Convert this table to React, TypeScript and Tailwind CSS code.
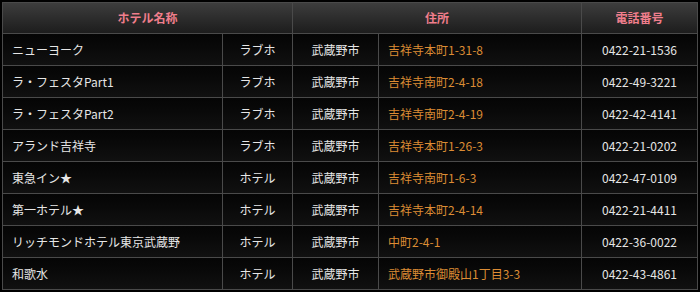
const hotels = [
  { name: "ニューヨーク", type: "ラブホ", city: "武蔵野市", address: "吉祥寺本町1-31-8", tel: "0422-21-1536" },
  { name: "ラ・フェスタPart1", type: "ラブホ", city: "武蔵野市", address: "吉祥寺南町2-4-18", tel: "0422-49-3221" },
  { name: "ラ・フェスタPart2", type: "ラブホ", city: "武蔵野市", address: "吉祥寺南町2-4-19", tel: "0422-42-4141" },
  { name: "アランド吉祥寺", type: "ラブホ", city: "武蔵野市", address: "吉祥寺本町1-26-3", tel: "0422-21-0202" },
  { name: "東急イン★", type: "ホテル", city: "武蔵野市", address: "吉祥寺南町1-6-3", tel: "0422-47-0109" },
  { name: "第一ホテル★", type: "ホテル", city: "武蔵野市", address: "吉祥寺本町2-4-14", tel: "0422-21-4411" },
  { name: "リッチモンドホテル東京武蔵野", type: "ホテル", city: "武蔵野市", address: "中町2-4-1", tel: "0422-36-0022" },
  { name: "和歌水", type: "ホテル", city: "武蔵野市", address: "武蔵野市御殿山1丁目3-3", tel: "0422-43-4861" },
];

export default function App() {
  return (
    <div
      className="w-[700px] h-[292px] bg-black p-[2px] text-[12px] text-[#e6e6e6]"
      style={{ fontFamily: '"Noto Sans CJK JP", "Noto Sans", sans-serif' }}
    >
      <table className="w-full border-collapse border border-[#4a4a4a] table-fixed">
        <colgroup>
          <col className="w-[220px]" />
          <col className="w-[70px]" />
          <col className="w-[86px]" />
          <col className="w-[203px]" />
          <col />
        </colgroup>
        <thead>
          <tr className="h-[31px] bg-gradient-to-b from-[#3d3d3d] to-[#1c1c1c] text-[#f07e8c] font-bold">
            <th colSpan={2} className="border border-[#4a4a4a] font-bold">ホテル名称</th>
            <th colSpan={2} className="border border-[#4a4a4a] font-bold">住所</th>
            <th className="border border-[#4a4a4a] font-bold">電話番号</th>
          </tr>
        </thead>
        <tbody>
          {hotels.map((h) => (
            <tr key={h.name} className="h-[32px] bg-gradient-to-b from-[#050505] to-[#111111]">
              <td className="border border-[#4a4a4a] pl-[9px]">{h.name}</td>
              <td className="border border-[#4a4a4a] text-center">{h.type}</td>
              <td className="border border-[#4a4a4a] text-center">{h.city}</td>
              <td className="border border-[#4a4a4a] pl-[9px] text-[#dc8c34]">{h.address}</td>
              <td className="border border-[#4a4a4a] text-center">{h.tel}</td>
            </tr>
          ))}
        </tbody>
      </table>
    </div>
  );
}
